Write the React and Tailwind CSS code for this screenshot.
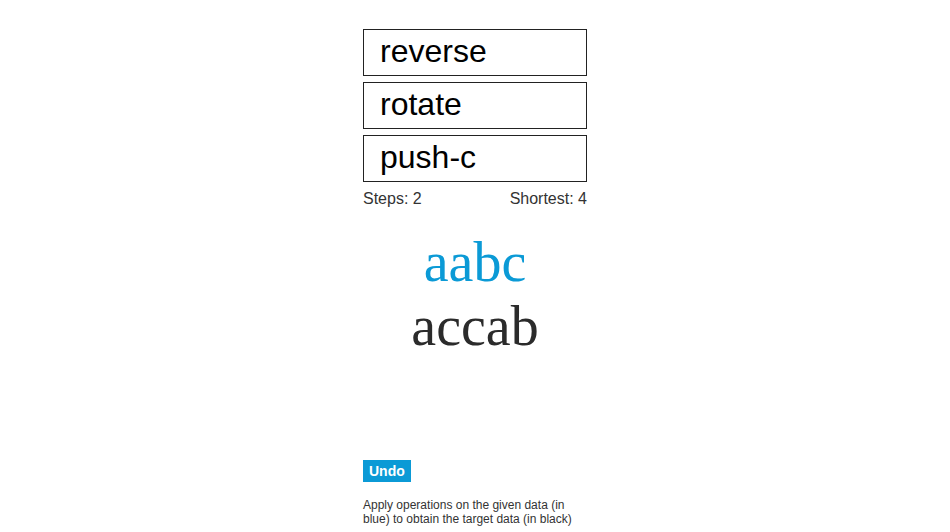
import { useState } from "react";

const ops = ["reverse", "rotate", "push-c"];

export default function App() {
  const [steps] = useState(2);

  return (
    <div className="min-h-[532px] bg-white font-['Liberation_Sans',Arial,sans-serif]">
      <div className="mx-auto w-[224px] pt-[29px]">
        <div className="flex flex-col gap-[6px]">
          {ops.map((op) => (
            <button
              key={op}
              className="h-[47px] border border-[#222] bg-white pl-4 pb-[3px] text-left text-[32px] leading-[36px] text-black"
            >
              {op}
            </button>
          ))}
        </div>

        <div className="mt-[8px] flex justify-between text-[16px] leading-[18px] text-[#333]">
          <span>Steps: {steps}</span>
          <span>Shortest: 4</span>
        </div>

        {/* data */}
        <div className="mt-[22px] text-center font-['Liberation_Serif','Times_New_Roman',serif] text-[56px] leading-[64px]">
          <div className="text-[#0b9ad6]">aabc</div>
          <div className="text-[#2b2b2b]">accab</div>
        </div>

        <button className="mt-[102px] block h-[22px] bg-[#0b9ad6] px-[6px] text-[14px] font-bold text-white">
          Undo
        </button>

        <p className="mt-[16px] text-[12px] leading-[14px] text-[#333]">
          Apply operations on the given data (in blue) to obtain the target data (in black)
        </p>
      </div>
    </div>
  );
}
